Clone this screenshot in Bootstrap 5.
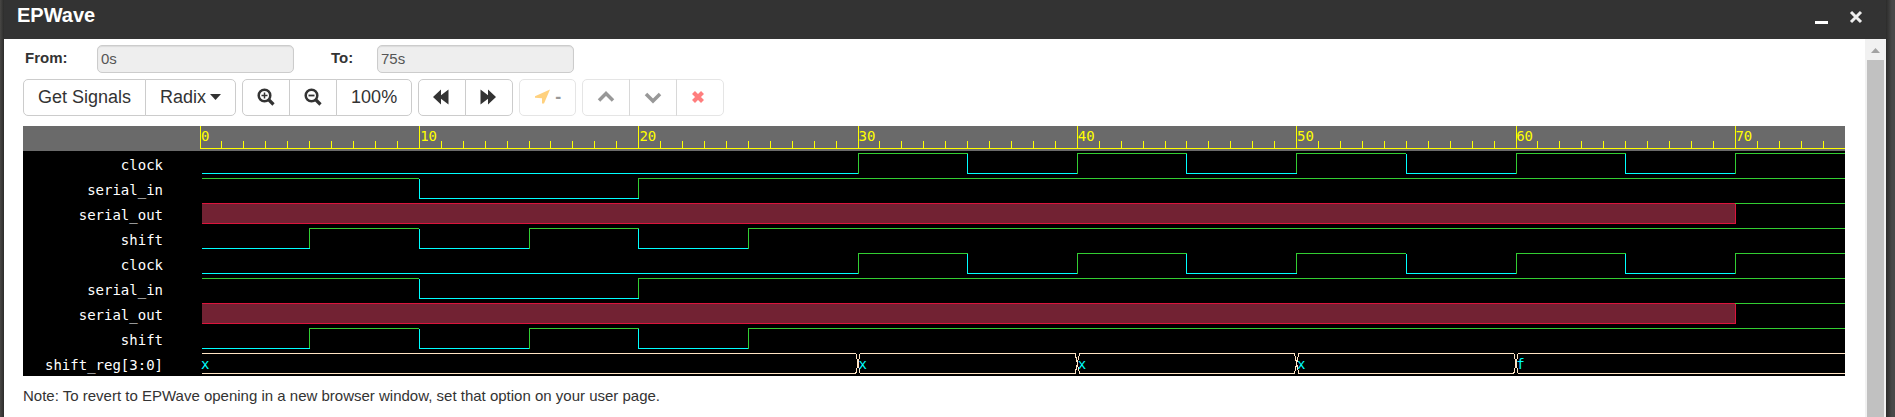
<!DOCTYPE html>
<html lang="en">
<head>
<meta charset="utf-8">
<meta name="viewport" content="width=device-width, initial-scale=1">
<title>EPWave</title>
<link href="https://cdn.jsdelivr.net/npm/bootstrap@5.3.0/dist/css/bootstrap.min.css" rel="stylesheet">
<style>
  body { font-family: "Liberation Sans", Arial, sans-serif; font-size: 15px; line-height: 20px; color: #333; background: #444; }
  .ep-backdrop { padding: 0 9px 0 4px; background: linear-gradient(to right, #484745, #2c2c2b 4px, #2c2c2b calc(100% - 9px), #484848 calc(100% - 3px)); }
  .ep-title { height: 39px; background: #333; padding: 0 23px 10px 13px; }
  .ep-title h1 { font-size: 20px; line-height: 24px; font-weight: 700; color: #fff; }
  .ep-winbtn { width: 14px; height: 14px; }
  .ep-content { padding: 6px 20px 0 19px; min-width: 0; }
  .ep-label { font-weight: 700; padding: 0 0 2px 2px; width: 74px; }
  .ep-label-to { width: 46px; margin-left: 37px; padding-left: 0; }
  .ep-field { width: 197px; height: 28px; border: 1px solid #ccc; border-radius: 5px; padding: 0 3px 2px; background: #eee; color: #555; font-size: 15px; box-shadow: inset 0 1px 1px rgba(0,0,0,.08); }
  .ep-tools { gap: 6px; margin: 6px 0 10px; }
  .ep-tools .btn { --bs-btn-color: #333; --bs-btn-border-color: #ccc; --bs-btn-bg: #fff; --bs-btn-disabled-color: #333; --bs-btn-disabled-border-color: #ccc; --bs-btn-disabled-bg: #fff; --bs-btn-disabled-opacity: .5; --bs-btn-font-size: 18px; --bs-btn-line-height: 20px; --bs-btn-padding-x: 14px; --bs-btn-border-radius: 5px; height: 37px; flex: none; padding-top: 0; padding-bottom: 2px; }
  .ep-tools .btn.ep-sq { width: 48px; }
  .ep-tools svg { display: block; fill: currentColor; }
  .ep-wave { background: #000; font: 14px/25px "DejaVu Sans Mono", monospace; color: #fff; }
  .ep-line { display: grid; grid-template-columns: 177px minmax(0, 1fr); height: 25px; }
  .ep-name { text-align: right; padding-right: 37px; padding-top: 2px; }
  .ep-line svg { display: block; width: 100%; height: 25px; grid-area: 1 / 2; }
  .ep-line path { fill: none; stroke-width: 1px; vector-effect: non-scaling-stroke; shape-rendering: crispEdges; }
  .ep-ruler { background: #6a6a6a; color: #ff0; line-height: 20px; }
  .ep-ruler path { stroke: #ff0; }
  .ep-line path.hi { stroke: #32cd32; }
  .ep-line path.lo { stroke: #0ff; }
  .ep-line path.unk { stroke: #dc143c; fill: #722233; }
  .ep-line path.bus { stroke: #ffe4c4; }
  .ep-marks { grid-area: 1 / 2; display: grid; grid-template-columns: repeat(7, 10fr) 5fr; padding-left: 1px; }
  .ep-values { grid-area: 1 / 2; display: grid; grid-template-columns: 30fr 10fr 10fr 10fr 15fr; color: #0ff; padding: 1px 0 0 1px; }
  .ep-note { margin: 10px 0 31px; }
  .ep-scroll { width: 21px; background: #f1f1f1; flex: none; }
  .ep-thumb { background: #c1c1c1; margin: 0 2px; }
</style>
</head>
<body>
<div class="ep-backdrop d-flex flex-column min-vh-100">
  <header class="ep-title d-flex align-items-center justify-content-between">
    <h1 class="m-0">EPWave</h1>
    <div class="d-flex align-items-center gap-3 pt-1">
      <button type="button" class="btn p-0 border-0 ep-winbtn me-1 d-flex" aria-label="Minimize"><svg width="14" height="16"><path d="M0 11h13v3H0z" fill="#fff"/></svg></button>
      <button type="button" class="btn p-0 border-0 ep-winbtn d-flex" aria-label="Close"><svg width="14" height="14"><path d="M2 2l10 10M12 2L2 12" stroke="#eee" stroke-width="3"/></svg></button>
    </div>
  </header>
  <div class="d-flex flex-grow-1 bg-white">
    <main class="ep-content flex-grow-1">
      <form class="d-flex align-items-center">
        <label class="ep-label" for="from">From:</label>
        <input class="ep-field" id="from" type="text" value="0s" readonly>
        <label class="ep-label ep-label-to" for="to">To:</label>
        <input class="ep-field" id="to" type="text" value="75s" readonly>
      </form>
      <div class="ep-tools d-flex flex-wrap">
        <div class="btn-group">
          <button type="button" class="btn">Get Signals</button>
          <button type="button" class="btn d-flex align-items-center gap-1">Radix<svg width="11" height="6"><path d="M0 0h11L5.500 6z"/></svg></button>
        </div>
        <div class="btn-group">
          <button type="button" class="btn ep-sq" aria-label="Zoom in"><svg width="18" height="18"><g fill="none" stroke="currentColor"><circle cx="7.500" cy="7.500" r="5.800" stroke-width="2.500"/><path d="M12 12l4.500 4.500" stroke-width="3.200"/><path d="M7.500 4.500v6M4.500 7.500h6" stroke-width="1.500"/></g></svg></button>
          <button type="button" class="btn ep-sq" aria-label="Zoom out"><svg width="18" height="18"><g fill="none" stroke="currentColor"><circle cx="7.500" cy="7.500" r="5.800" stroke-width="2.500"/><path d="M12 12l4.500 4.500" stroke-width="3.200"/><path d="M4.500 7.500h6" stroke-width="1.800"/></g></svg></button>
          <button type="button" class="btn">100%</button>
        </div>
        <div class="btn-group">
          <button type="button" class="btn ep-sq" aria-label="Back"><svg width="17" height="16"><path d="M0 8L8 .5v5.800L15.500.5v15L8 9.700v5.800z"/></svg></button>
          <button type="button" class="btn ep-sq" aria-label="Forward"><svg width="17" height="16"><path d="M16 8L8 .5v5.800L.5.5v15L8 9.700v5.800z"/></svg></button>
        </div>
        <div class="btn-group">
          <button type="button" class="btn d-flex align-items-center gap-1" disabled><svg width="17" height="16"><path d="M16 .5L10 14.500H8V9.200L1 8.800V7.300z" fill="#ffa500"/></svg><b>-</b></button>
        </div>
        <div class="btn-group">
          <button type="button" class="btn ep-sq" aria-label="Up" disabled><svg width="18" height="16"><path d="M2 11.500l7-7 7 7" fill="none" stroke="currentColor" stroke-width="3.500"/></svg></button>
          <button type="button" class="btn ep-sq" aria-label="Down" disabled><svg width="18" height="16"><path d="M2 5l7 7 7-7" fill="none" stroke="currentColor" stroke-width="3.500"/></svg></button>
          <button type="button" class="btn ep-sq" aria-label="Remove" disabled><svg width="14" height="14"><path d="M2.500 2.500l9 9M11.500 2.500l-9 9" stroke="#f00" stroke-width="4.200"/></svg></button>
        </div>
      </div>
      <section class="ep-wave" aria-label="Waveforms">
        <div class="ep-line ep-ruler">
          <svg viewBox="0 0 75 25" preserveAspectRatio="none"><path id="minor" d="M0 22.500H75"/><path d="M.02 0V22M10 0V22M20 0V22M30 0V22M40 0V22M50 0V22M60 0V22M70 0V22"/></svg>
          <div class="ep-marks"><span>0</span><span>10</span><span>20</span><span>30</span><span>40</span><span>50</span><span>60</span><span>70</span></div>
        </div>
        <div id="signals"></div>
        <div class="ep-line">
          <span class="ep-name">shift_reg[3:0]</span>
          <svg viewBox="0 0 75 25" preserveAspectRatio="none"><path class="bus" d="M.1 2.500H29.900L30.100 22.500H39.900L40.100 2.500H49.900L50.100 22.500H59.900L60.100 2.500H75M.1 22.500H29.900L30.100 2.500H39.900L40.100 22.500H49.900L50.100 2.500H59.900L60.100 22.500H75"/></svg>
          <div class="ep-values"><span>x</span><span>x</span><span>x</span><span>x</span><span>f</span></div>
        </div>
      </section>
      <p class="ep-note">Note: To revert to EPWave opening in a new browser window, set that option on your user page.</p>
    </main>
    <div class="ep-scroll d-flex flex-column">
      <svg width="21" height="21"><path d="M6 14l4.500-5 4.500 5z" fill="#a3a3a3"/></svg>
      <div class="ep-thumb flex-grow-1"></div>
    </div>
  </div>
</div>
<script src="https://cdn.jsdelivr.net/npm/bootstrap@5.3.0/dist/js/bootstrap.bundle.min.js"></script>
<script>
  // Minor ruler ticks, one per second
  let ticks = 'M0 22.5H75';
  for (let t = 1; t < 75; t++) ticks += `M${t} 15V22`;
  document.getElementById('minor').setAttribute('d', ticks);

  // Each signal lists [time, level] changes; x is an unknown level
  const END = 75;
  const clock = [[0, 0], [30, 1], [35, 0], [40, 1], [45, 0], [50, 1], [55, 0], [60, 1], [65, 0], [70, 1]];
  const group = {
    clock,
    serial_in: [[0, 1], [10, 0], [20, 1]],
    serial_out: [[0, 'x'], [70, 1]],
    shift: [[0, 0], [5, 1], [10, 0], [15, 1], [20, 0], [25, 1]]
  };
  function row(name, changes) {
    let hi = '', lo = '', unk = '';
    changes.forEach(([t, level], i) => {
      const end = i + 1 < changes.length ? changes[i + 1][0] : END;
      const start = t || .1;
      if (level === 'x') unk += `M${start} 2.5H${end}V22.5H${start}`;
      else if (level) hi += (t && changes[i - 1][1] === 0 ? `M${t} 22.5V2.5` : `M${start} 2.5`) + `H${end}`;
      else lo += (t ? `M${t} 2.5V22.5` : `M${start} 22.5`) + `H${end}`;
    });
    return `<div class="ep-line"><span class="ep-name">${name}</span><svg viewBox="0 0 75 25" preserveAspectRatio="none">` +
      `<path class="unk" d="${unk}"/><path class="hi" d="${hi}"/><path class="lo" d="${lo}"/></svg></div>`;
  }
  const rows = Object.entries(group).map(([n, c]) => row(n, c)).join('');
  document.getElementById('signals').innerHTML = rows + rows;
</script>
</body>
</html>
